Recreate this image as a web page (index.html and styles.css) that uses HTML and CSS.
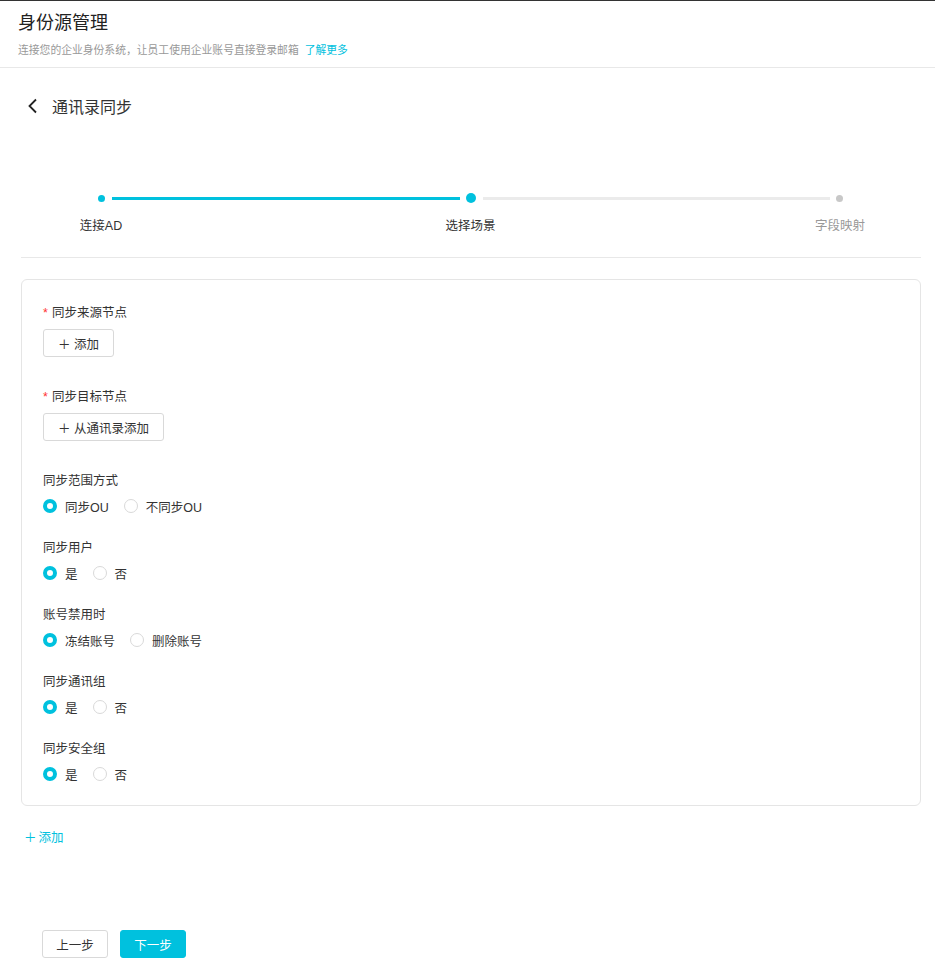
FILE: index.html
```html
<!DOCTYPE html>
<html lang="zh-CN">
<head>
  <meta charset="UTF-8">
  <title>身份源管理</title>
  <meta name="viewport" content="width=device-width, initial-scale=1.0">
  <link rel="stylesheet" href="styles.css">
</head>
<body>

<header class="page-header">
  <h1>身份源管理</h1>
  <p class="sub">连接您的企业身份系统，让员工使用企业账号直接登录邮箱 <a href="#" class="link">了解更多</a></p>
</header>

<div class="main">
  <div class="back-row">
    <svg class="back-icon" width="12" height="16" viewBox="0 0 12 16"><path d="M9 1.5 L2.5 8 L9 14.5" fill="none" stroke="#222" stroke-width="1.8"/></svg>
    <span>通讯录同步</span>
  </div>

  <div class="steps">
    <div class="track">
      <span class="dot done"></span>
      <span class="line done"></span>
      <span class="dot current"></span>
      <span class="line"></span>
      <span class="dot"></span>
    </div>
    <div class="step-labels">
      <span>连接AD</span>
      <span>选择场景</span>
      <span class="todo">字段映射</span>
    </div>
  </div>

  <div class="card">
    <div class="field field-btn">
      <div class="label"><i class="req">*</i>同步来源节点</div>
      <button class="btn">＋ 添加</button>
    </div>
    <div class="field field-btn">
      <div class="label"><i class="req">*</i>同步目标节点</div>
      <button class="btn">＋ 从通讯录添加</button>
    </div>
    <div class="field">
      <div class="label">同步范围方式</div>
      <div class="radios">
        <label class="radio checked"><span class="circle"></span>同步OU</label>
        <label class="radio"><span class="circle"></span>不同步OU</label>
      </div>
    </div>
    <div class="field">
      <div class="label">同步用户</div>
      <div class="radios">
        <label class="radio checked"><span class="circle"></span>是</label>
        <label class="radio"><span class="circle"></span>否</label>
      </div>
    </div>
    <div class="field">
      <div class="label">账号禁用时</div>
      <div class="radios">
        <label class="radio checked"><span class="circle"></span>冻结账号</label>
        <label class="radio"><span class="circle"></span>删除账号</label>
      </div>
    </div>
    <div class="field">
      <div class="label">同步通讯组</div>
      <div class="radios">
        <label class="radio checked"><span class="circle"></span>是</label>
        <label class="radio"><span class="circle"></span>否</label>
      </div>
    </div>
    <div class="field">
      <div class="label">同步安全组</div>
      <div class="radios">
        <label class="radio checked"><span class="circle"></span>是</label>
        <label class="radio"><span class="circle"></span>否</label>
      </div>
    </div>
  </div>

  <a href="#" class="add-link"><span class="plus">＋</span>添加</a>

  <div class="footer-btns">
    <button class="btn btn-step">上一步</button>
    <button class="btn btn-step primary">下一步</button>
  </div>
</div>

</body>
</html>
```

FILE: styles.css
```css
body {
  font-family: "Liberation Sans", "Noto Sans CJK SC", sans-serif;
  margin: 0;
  background-color: #fff;
  color: #333;
  font-size: 12px;
}
.page-header {
  border-top: 1px solid #333;
  border-bottom: 1px solid #e8e8e8;
  padding: 10px 18px 0;
  height: 56px;
}
.page-header h1 {
  margin: 0;
  font-size: 18px;
  font-weight: normal;
  line-height: 24px;
  color: #222;
}
.sub {
  margin: 7px 0 0;
  font-size: 10.8px;
  line-height: 16px;
  color: #999;
}
.link {
  color: #00c1de;
  text-decoration: none;
  margin-left: 3px;
}
.main {
  margin: 0 14px 0 21px;
}
.back-row {
  display: flex;
  align-items: center;
  gap: 13px;
  padding: 26px 0 0 6px;
  height: 24px;
  font-size: 16px;
  color: #333;
}
.steps {
  margin-top: 75px;
  border-bottom: 1px solid #e8e8e8;
  padding-bottom: 22px;
}
.track {
  display: flex;
  align-items: center;
  height: 10px;
  padding: 0 78px 0 77px;
}
.dot {
  width: 7px;
  height: 7px;
  border-radius: 50%;
  background: #c8c8c8;
  flex: none;
}
.dot.done {
  background: #00c1de;
}
.dot.current {
  width: 10px;
  height: 10px;
  background: #00c1de;
}
.line {
  flex: 1;
  height: 3px;
  background: #ebebeb;
  margin: 0 6px 0 7px;
}
.line.done {
  background: #00c1de;
}
.step-labels {
  display: flex;
  justify-content: space-between;
  padding: 0 41px 0 40px;
  margin-top: 14px;
  font-size: 12.5px;
  line-height: 18px;
}
.step-labels span {
  width: 80px;
  text-align: center;
}
.step-labels .todo {
  color: #999;
}
.card {
  margin-top: 21px;
  border: 1px solid #e5e5e5;
  border-radius: 6px;
  padding: 24px 21px 22px;
}
.field {
  margin-bottom: 24px;
}
.field-btn {
  margin-bottom: 31px;
}
.field:last-child {
  margin-bottom: 0;
}
.label {
  line-height: 18px;
  margin-bottom: 7px;
  font-size: 12.5px;
}
.req {
  color: #f33;
  font-style: normal;
  margin-right: 4px;
}
.btn {
  font-family: inherit;
  font-size: 12.5px;
  color: #333;
  background: #fff;
  border: 1px solid #d9d9d9;
  border-radius: 3px;
  height: 28px;
  padding: 0 14px;
}
.radios {
  display: flex;
  height: 18px;
  align-items: center;
}
.radio {
  display: flex;
  align-items: center;
  margin-right: 15px;
  font-size: 12.5px;
}
.circle {
  width: 14px;
  height: 14px;
  box-sizing: border-box;
  border: 1px solid #d9d9d9;
  border-radius: 50%;
  margin-right: 8px;
  background: #fff;
}
.radio.checked .circle {
  border: 4.5px solid #00c1de;
}
.add-link {
  display: block;
  margin: 23px 0 0 3px;
  color: #00c1de;
  text-decoration: none;
  line-height: 18px;
  font-size: 12.5px;
}
.plus {
  margin-right: 2px;
}
.footer-btns {
  display: flex;
  gap: 12px;
  margin: 83px 0 0 21px;
}
.btn-step {
  width: 66px;
  padding: 0;
}
.primary {
  background: #00c1de;
  border-color: #00c1de;
  color: #fff;
}
```
